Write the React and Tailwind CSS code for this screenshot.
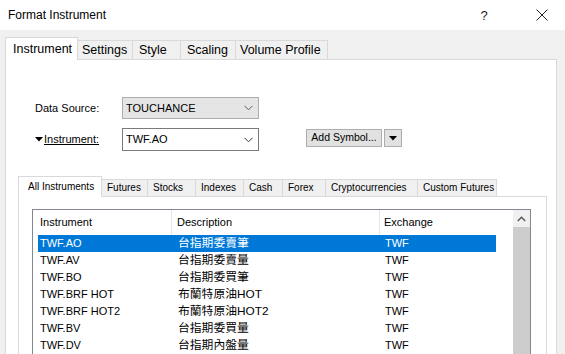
import React from "react";

const rows = [
  ["TWF.AO", "台指期委賣筆", "TWF"],
  ["TWF.AV", "台指期委賣量", "TWF"],
  ["TWF.BO", "台指期委買筆", "TWF"],
  ["TWF.BRF HOT", "布蘭特原油HOT", "TWF"],
  ["TWF.BRF HOT2", "布蘭特原油HOT2", "TWF"],
  ["TWF.BV", "台指期委買量", "TWF"],
  ["TWF.DV", "台指期內盤量", "TWF"],
];

const Chevron = ({ color = "#606060" }) => (
  <svg width="9" height="6" viewBox="0 0 9 6" className="shrink-0">
    <polyline points="0.5,0.8 4.5,4.8 8.5,0.8" fill="none" stroke={color} strokeWidth="1" />
  </svg>
);

const DownTri = () => (
  <svg width="8" height="5" viewBox="0 0 8 5" className="shrink-0">
    <polygon points="0,0 8,0 4,4.5" fill="#000" />
  </svg>
);

export default function App() {
  return (
    <div className="w-[565px] h-[354px] overflow-hidden bg-[#f0f0f0] font-['Liberation_Sans','Noto_Sans_CJK_TC',sans-serif] text-black">
      {/* Title bar */}
      <div className="h-[30px] bg-white flex items-center">
        <div className="pl-[8px] text-[12px] flex-1 leading-none">Format Instrument</div>
        <div className="w-[30px] text-[13px] text-center text-[#222] leading-none mr-[20px]">?</div>
        <div className="w-[46px] flex justify-center">
          <svg width="12" height="12" viewBox="0 0 12 12">
            <line x1="0.5" y1="0.5" x2="11.5" y2="11.5" stroke="#222" strokeWidth="1" />
            <line x1="11.5" y1="0.5" x2="0.5" y2="11.5" stroke="#222" strokeWidth="1" />
          </svg>
        </div>
      </div>

      {/* Body */}
      <div className="pl-[5px] pr-[8px] pt-[7px]">
        {/* Outer tabs */}
        <div className="flex items-end h-[22px] text-[12.5px] leading-none whitespace-nowrap">
          <div className="relative z-10 -mb-px w-[73px] h-[23px] bg-white border border-b-0 border-[#d9d9d9] flex items-center pl-[7px]">
            Instrument
          </div>
          <div className="w-[55px] h-[19px] bg-[#f0f0f0] border border-b-0 border-l-0 border-[#d9d9d9] flex items-center pl-[4px]">Settings</div>
          <div className="w-[48px] h-[19px] bg-[#f0f0f0] border border-b-0 border-l-0 border-[#d9d9d9] flex items-center pl-[6px]">Style</div>
          <div className="w-[55px] h-[19px] bg-[#f0f0f0] border border-b-0 border-l-0 border-[#d9d9d9] flex items-center pl-[6px]">Scaling</div>
          <div className="w-[92px] h-[19px] bg-[#f0f0f0] border border-b-0 border-l-0 border-[#d9d9d9] flex items-center pl-[4px]">Volume Profile</div>
        </div>

        {/* Outer panel */}
        <div className="bg-white border border-[#d9d9d9] h-[320px] text-[11px]">
          {/* Data source row */}
          <div className="flex items-center h-[22px] mt-[37px] pl-[29px]">
            <div className="w-[87px]">Data Source:</div>
            <div className="w-[137px] h-[22px] bg-[#e5e5e5] border border-[#adadad] flex items-center pl-[3px] pr-[5px]">
              <span className="flex-1">TOUCHANCE</span>
              <Chevron />
            </div>
          </div>
          {/* Instrument row */}
          <div className="flex items-center h-[23px] mt-[9px] pl-[29px]">
            <div className="w-[87px] flex items-center gap-[1px]">
              <DownTri />
              <span className="underline">Instrument:</span>
            </div>
            <div className="w-[137px] h-[23px] bg-white border border-[#7a7a7a] flex items-center pl-[3px] pr-[5px]">
              <span className="flex-1">TWF.AO</span>
              <Chevron color="#333" />
            </div>
            <div className="ml-[47px] -mt-[3px] w-[76px] h-[18px] bg-[#e1e1e1] border border-[#adadad] flex items-center justify-center text-[10.5px] whitespace-nowrap">
              Add Symbol...
            </div>
            <div className="ml-[2px] -mt-[3px] w-[18px] h-[18px] bg-[#e1e1e1] border border-[#adadad] flex items-center justify-center">
              <DownTri />
            </div>
          </div>

          {/* Inner tabs */}
          <div className="ml-[12px] mr-[9px] mt-[25px]">
            <div className="flex items-end h-[20px] text-[10px] leading-none whitespace-nowrap">
              <div className="relative z-10 -mb-px w-[84px] h-[21px] bg-white border border-b-0 border-[#d9d9d9] flex items-center pl-[9px]">
                All Instruments
              </div>
              {[
                ["Futures", "w-[46px]"],
                ["Stocks", "w-[48px]"],
                ["Indexes", "w-[48px]"],
                ["Cash", "w-[39px]"],
                ["Forex", "w-[43px]"],
                ["Cryptocurrencies", "w-[92px]"],
                ["Custom Futures", "w-[79px]"],
              ].map(([t, w]) => (
                <div
                  key={t}
                  className={`${w} h-[17px] bg-[#f0f0f0] border border-b-0 border-l-0 border-[#d9d9d9] flex items-center pl-[5px] overflow-hidden`}
                >
                  {t}
                </div>
              ))}
            </div>
            <div className="bg-white border border-[#d9d9d9] h-[200px] pt-[12px] pl-[13px] pr-[15px]">
              {/* List box */}
              <div className="border border-[#828790] h-[180px] flex">
                <div className="flex-1 pl-[5px]">
                  <div className="flex h-[25px] items-center">
                    <div className="w-[134px] h-full flex items-center pl-[2px] border-r border-[#e5e5e5]">Instrument</div>
                    <div className="w-[208px] h-full flex items-center pl-[5px] border-r border-[#e5e5e5]">Description</div>
                    <div className="w-[116px] h-full flex items-center pl-[4px]">Exchange</div>
                  </div>
                  {rows.map((r, i) => (
                    <div
                      key={r[0]}
                      className={`flex h-[17px] items-center w-[458px] ${i === 0 ? "bg-[#0078d7] text-white" : ""}`}
                    >
                      <div className="w-[134px] pl-[2px]">{r[0]}</div>
                      <div className="w-[208px] pl-[6px] text-[11.8px]">{r[1]}</div>
                      <div className="w-[116px] pl-[5px]">{r[2]}</div>
                    </div>
                  ))}
                </div>
                {/* Scrollbar */}
                <div className="w-[17px] flex flex-col">
                  <div className="h-[17px] bg-[#f0f0f0] flex items-center justify-center">
                    <svg width="9" height="6" viewBox="0 0 9 6">
                      <polyline points="0.8,5 4.5,1.2 8.2,5" fill="none" stroke="#555" strokeWidth="1.4" />
                    </svg>
                  </div>
                  <div className="flex-1 bg-[#cdcdcd]"></div>
                </div>
              </div>
            </div>
          </div>
        </div>
      </div>
    </div>
  );
}
